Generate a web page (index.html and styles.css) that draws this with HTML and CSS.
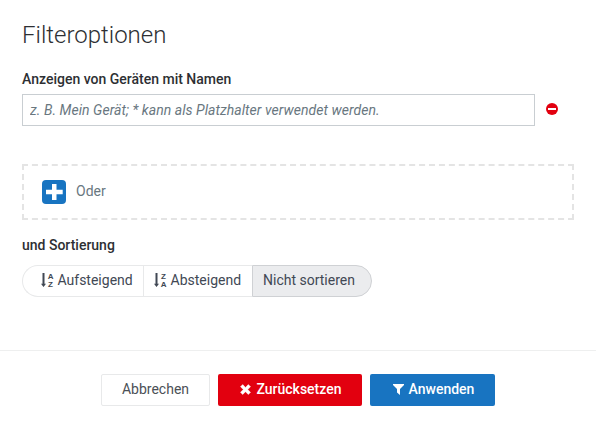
FILE: index.html
```html
<!DOCTYPE html>
<html lang="de">
<head>
<meta charset="utf-8">
<title>Filteroptionen</title>
<link rel="stylesheet" href="styles.css">
</head>
<body>
<main class="dialog">
  <section class="content">
    <h1 class="title">Filteroptionen</h1>
    <label class="label" for="name">Anzeigen von Geräten mit Namen</label>
    <div class="filter-row">
      <input class="input" id="name" type="text" placeholder="z. B. Mein Gerät; * kann als Platzhalter verwendet werden.">
      <svg class="remove" viewBox="0 0 12 12"><circle cx="6" cy="6" r="6" fill="#e2000f"/><rect x="2" y="5" width="8" height="2" fill="#fff"/></svg>
    </div>
    <div class="add-box">
      <svg class="add" viewBox="0 0 24 24"><rect width="24" height="24" rx="4" fill="#1874c1"/><path d="M10 4h4.500v5.800h6.200v4.400h-6.200V20H10v-5.800H4V9.800h6z" fill="#fff"/></svg>
      <span class="or">Oder</span>
    </div>
    <div class="label sort-label">und Sortierung</div>
    <div class="group">
      <button class="option asc"><svg class="sort" viewBox="0 0 13 15"><path d="M1.500 0h2v10.700H5l-2.500 3.300L0 10.700h1.500z"/><text x="6.700" y="6">A</text><text x="7" y="14">Z</text></svg><span>Aufsteigend</span></button>
      <button class="option desc"><svg class="sort" viewBox="0 0 13 15"><path d="M1.500 0h2v10.700H5l-2.500 3.300L0 10.700h1.500z"/><text x="7" y="6">Z</text><text x="6.700" y="14">A</text></svg><span>Absteigend</span></button>
      <button class="option selected"><span>Nicht sortieren</span></button>
    </div>
  </section>
  <footer class="footer">
    <button class="button cancel">Abbrechen</button>
    <button class="button reset"><svg class="cross" viewBox="0 0 11 11"><path d="M2.700.6l2.800 2.800L8.300.6l2.200 2.200-2.800 2.700 2.800 2.800-2.200 2.200-2.800-2.800-2.800 2.800L.5 8.300l2.800-2.800L.5 2.800z" fill="#fff" stroke="#fff" stroke-width=".5" stroke-linejoin="round"/></svg><span>Zurücksetzen</span></button>
    <button class="button apply"><svg class="funnel" viewBox="0 0 11 11"><path d="M0 0h11v1L7 5v6L4 8.500V5L0 1z" fill="#fff"/></svg><span>Anwenden</span></button>
  </footer>
</main>
</body>
</html>
```
FILE: styles.css
```css
* { box-sizing: border-box; }
body {
  margin: 0;
  background: #fff;
  color: #2d2f33;
  font: 14px/20px Roboto, sans-serif;
}
button, input { font: inherit; margin: 0; }
svg { display: block; flex: none; }
.dialog { height: 430px; display: flex; flex-direction: column; }
.content { height: 350px; padding: 19px 22px 0; }
.title { margin: 0 0 18px; font-size: 24px; line-height: 32px; font-weight: 300; }
.label { display: block; font-weight: 500; font-size: 14px; line-height: 20px; }
.filter-row { display: flex; align-items: center; gap: 11px; margin-top: 5px; }
.input {
  width: 513px;
  height: 32px;
  padding: 0 7px;
  border: 1px solid #c9ced2;
  border-radius: 0;
  background: #fff;
}
.input::placeholder { color: #69777f; font-style: italic; letter-spacing: .05px; opacity: 1; }
.remove { width: 12px; height: 12px; margin-top: -2px; }
.add-box {
  display: flex;
  align-items: center;
  gap: 10px;
  height: 56px;
  margin-top: 38px;
  padding-left: 18px;
  border: 2px dashed #e4e4e4;
}
.add { width: 24px; height: 24px; }
.or { padding-bottom: 2px; color: #69777f; }
.sort-label { margin-top: 15px; }
.group { display: flex; width: 350px; height: 32px; margin-top: 10px; }
.option {
  display: flex;
  align-items: center;
  gap: 4px;
  padding: 0 0 1px 10px;
  border: 1px solid #e8e9ea;
  border-right: 0;
  background: #fff;
  color: #414854;
  white-space: nowrap;
}
.option span { padding-bottom: 2px; }
.asc { width: 121px; padding-left: 18px; border-radius: 16px 0 0 16px; }
.desc { width: 109px; }
.selected { width: 120px; border: 1px solid #cfd1d4; border-radius: 0 16px 16px 0; background: #ebecee; }
.sort { width: 13px; height: 15px; margin-right: -.5px; overflow: visible; fill: #414854; }
.sort text { font: bold 8px "Liberation Sans", sans-serif; }
.footer {
  display: flex;
  gap: 8px;
  height: 80px;
  padding: 23px 0 0 101px;
  border-top: 1px solid #eeefef;
}
.button {
  display: flex;
  align-items: center;
  justify-content: center;
  height: 32px;
  padding: 0 0 2px;
  border: 0;
  border-radius: 2px;
  color: #fff;
  font-weight: 500;
}
.cancel { width: 109px; border: 1px solid #e8e9ea; background: #fff; color: #4b5056; font-weight: 400; }
.reset { width: 144px; gap: 5px; padding-left: 2px; background: #e2000f; }
.apply { width: 125px; gap: 5px; padding-left: 2px; background: #1874c1; }
.cross, .funnel { width: 11px; height: 11px; margin-top: 1px; }
```
